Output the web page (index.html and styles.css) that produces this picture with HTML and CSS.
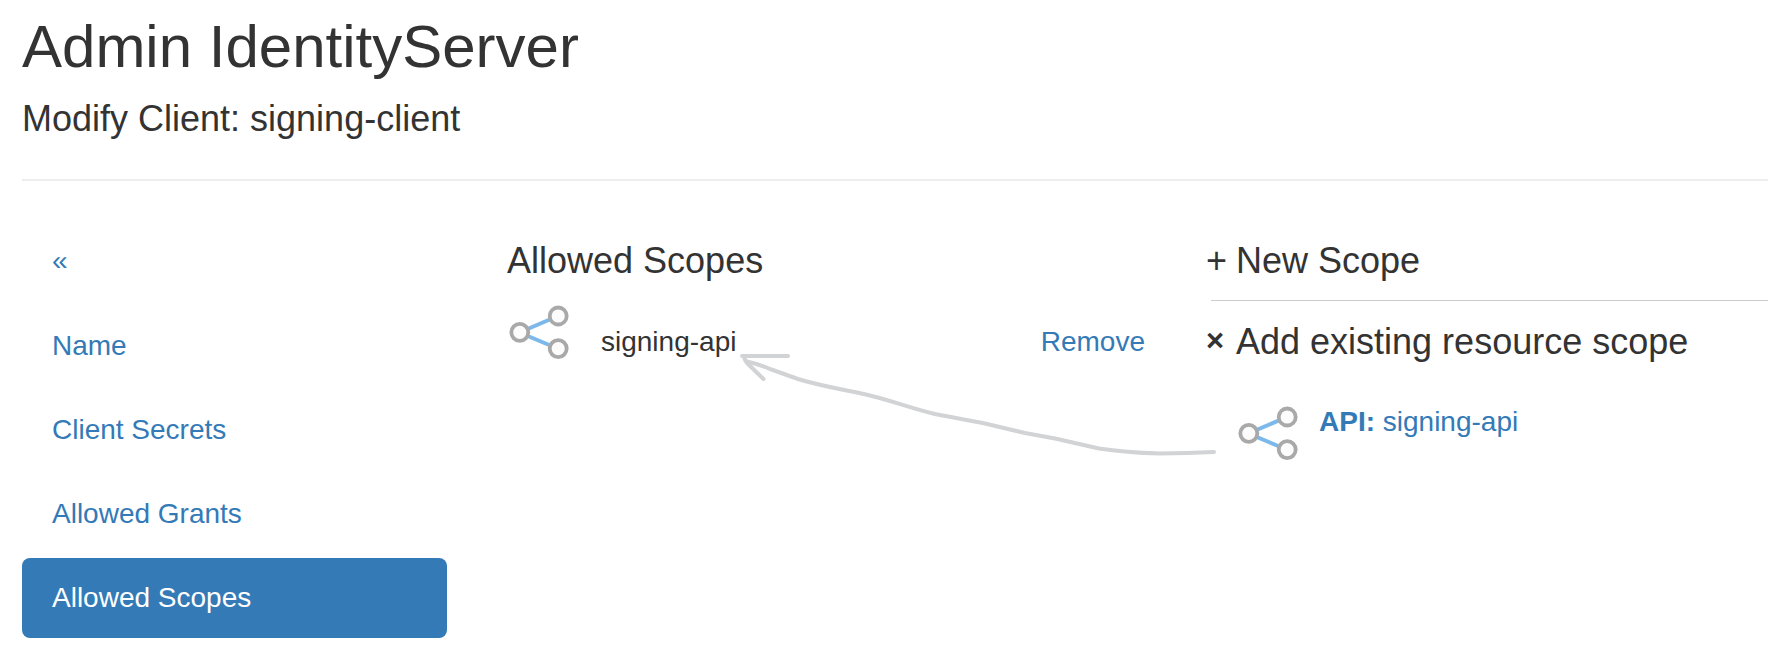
FILE: index.html
```html
<!DOCTYPE html>
<html lang="en">
<head>
<meta charset="utf-8">
<title>Admin IdentityServer</title>
<link rel="stylesheet" href="styles.css">
</head>
<body>
<svg class="sprite" width="0" height="0" aria-hidden="true">
  <symbol id="share" viewBox="0 0 62 56">
    <path d="M51 12 12.500 28.500l38 16" fill="none" stroke="#7cb9ea" stroke-width="4"/>
    <g fill="#fcfcfc" stroke="#a9a9a9" stroke-width="3.800">
      <circle cx="12.800" cy="28.300" r="8.500"/>
      <circle cx="51.200" cy="12" r="8.500"/>
      <circle cx="51.200" cy="44.600" r="8.500"/>
    </g>
  </symbol>
</svg>
<header class="page-header">
  <h1>Admin IdentityServer</h1>
  <h3>Modify Client: signing-client</h3>
</header>
<main class="columns">
  <nav class="nav">
    <a href="#" class="back">«</a>
    <a href="#">Name</a>
    <a href="#">Client Secrets</a>
    <a href="#">Allowed Grants</a>
    <a href="#" class="active">Allowed Scopes</a>
  </nav>
  <section class="scopes">
    <h3>Allowed Scopes</h3>
    <div class="scope-row">
      <svg class="share"><use href="#share"/></svg>
      <span class="scope-name">signing-api</span>
      <a href="#">Remove</a>
    </div>
  </section>
  <section class="add">
    <h3><span class="sign">+</span>New Scope</h3>
    <hr>
    <h3><span class="sign times">×</span>Add existing resource scope</h3>
    <div class="resource-row">
      <svg class="share"><use href="#share"/></svg>
      <a href="#"><b>API:</b> signing-api</a>
    </div>
  </section>
</main>
<svg class="arrow" viewBox="740 350 480 110" fill="none" stroke="#d2d3d5" stroke-width="4" stroke-linecap="round" stroke-linejoin="round">
  <path d="M742 356H788M744.500 358.500Q745 361 748 364L763.500 379"/>
  <path d="M747 361.500Q758 364 770 369L798 379C820 386 842 389 866 394.500C890 400 910 408 935 414C952 417.500 968 420 985 423.500L1025 433L1055 438.500L1099 448.500C1118 451.500 1140 453 1160 453.500Q1187 453.200 1214 452"/>
</svg>
</body>
</html>
```
FILE: styles.css
```css
* { box-sizing: border-box; }
body {
  margin: 0;
  height: 656px;
  padding: 17px 0 0 22px;
  overflow: hidden;
  position: relative;
  background: #fff;
  color: #333;
  font: 28px/40px "Liberation Sans", Arial, sans-serif;
}
.sprite { position: absolute; }
h1, h3 { margin: 0; font-weight: 500; white-space: nowrap; }
h1 { font-size: 60px; line-height: 60px; }
h3 { font-size: 36px; line-height: 40px; }
a { color: #337ab7; text-decoration: none; white-space: nowrap; }
.page-header { height: 164px; border-bottom: 2px solid #eee; }
.page-header h3 { margin-top: 22px; }
.columns {
  display: grid;
  grid-template-columns: 425px 638px 1fr;
  column-gap: 60px;
  padding-top: 41px;
}
.nav { display: flex; flex-direction: column; gap: 4px; }
.nav a { height: 80px; padding: 20px 30px; border-radius: 8px; }
.nav .back { padding-top: 19px; }
.nav .active { background: #337ab7; color: #fff; }
.scopes { padding-top: 19px; }
.share { width: 62px; height: 56px; flex: none; }
.scope-row { display: flex; margin-top: 23px; height: 60px; }
.scope-row .scope-name { flex: 1; margin-left: 32px; padding-top: 18px; }
.scope-row a { padding-top: 18px; }
.add { padding-top: 19px; }
.add hr { margin: 19px 0 21px 6px; border: 0; border-top: 1px solid #ccc; }
.sign { display: inline-block; width: 31px; padding-left: 1px; }
.times { font-size: 31px; font-weight: 700; line-height: 28px; vertical-align: 3px; }
.resource-row { display: flex; margin: 43px 0 0 31px; }
.resource-row a { margin: -21px 0 0 21px; padding-top: 18px; }
.arrow { position: absolute; left: 740px; top: 350px; width: 480px; height: 110px; }
```
